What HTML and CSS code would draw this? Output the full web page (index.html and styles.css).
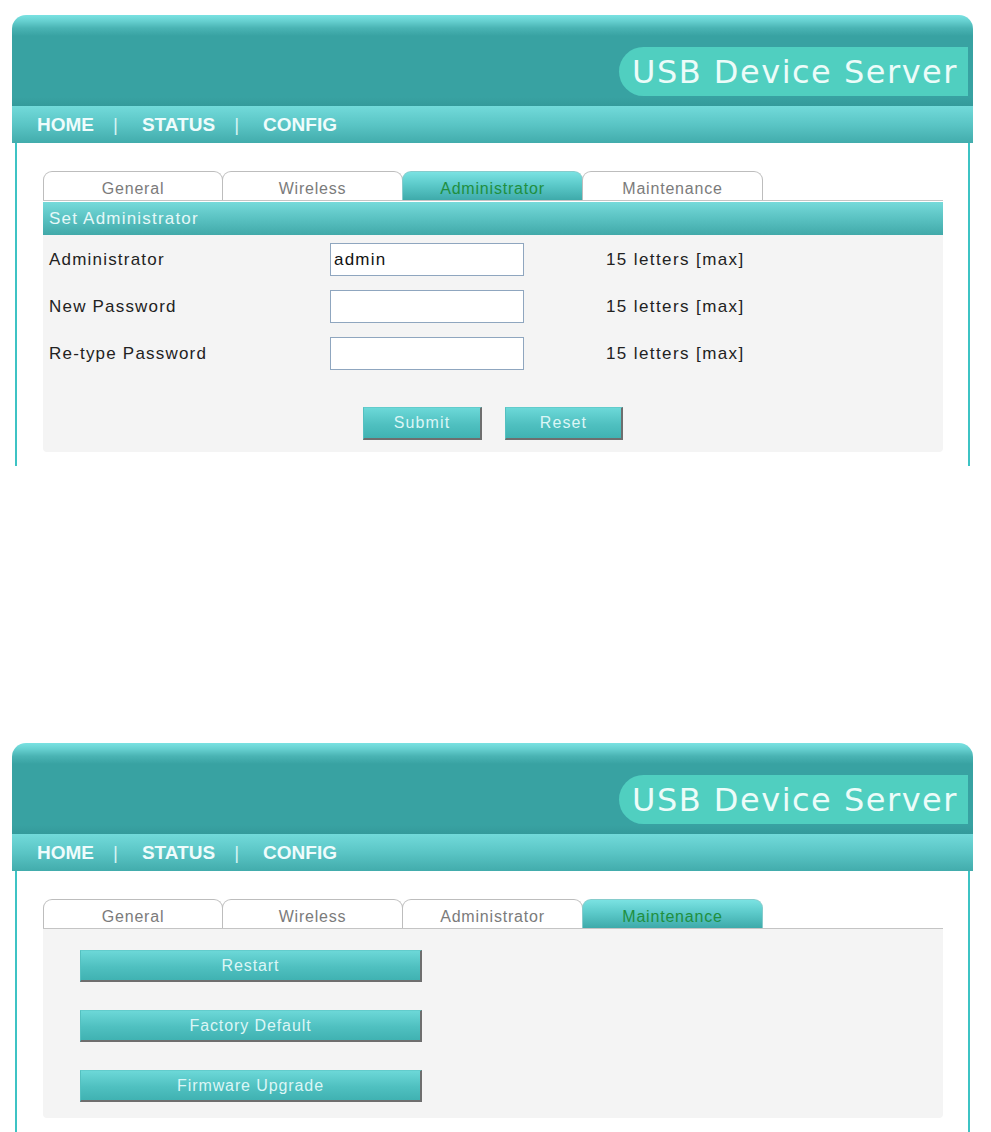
FILE: index.html
```html
<!DOCTYPE html>
<html lang="en">
<head>
<meta charset="utf-8">
<title>USB Device Server</title>
<link rel="stylesheet" href="styles.css">
</head>
<body>
<div class="page">
  <section class="panel">
    <div class="header"><div class="logo">USB Device Server</div></div>
    <nav class="nav"><span>HOME</span><span class="sep">|</span><span>STATUS</span><span class="sep">|</span><span>CONFIG</span></nav>
    <div class="body">
      <div class="tabs">
        <div class="tab">General</div>
        <div class="tab">Wireless</div>
        <div class="tab active">Administrator</div>
        <div class="tab">Maintenance</div>
      </div>
      <div class="section-title">Set Administrator</div>
      <form class="form">
        <div class="rows">
          <div class="row"><span class="label">Administrator</span><input class="input" type="text" value="admin"><span class="hint">15 letters [max]</span></div>
          <div class="row"><span class="label">New Password</span><input class="input" type="password" value=""><span class="hint">15 letters [max]</span></div>
          <div class="row"><span class="label">Re-type Password</span><input class="input" type="password" value=""><span class="hint">15 letters [max]</span></div>
        </div>
        <div class="actions">
          <button type="button" class="btn btn-submit">Submit</button>
          <button type="button" class="btn btn-reset">Reset</button>
        </div>
      </form>
    </div>
  </section>

  <section class="panel">
    <div class="header"><div class="logo">USB Device Server</div></div>
    <nav class="nav"><span>HOME</span><span class="sep">|</span><span>STATUS</span><span class="sep">|</span><span>CONFIG</span></nav>
    <div class="body">
      <div class="tabs">
        <div class="tab">General</div>
        <div class="tab">Wireless</div>
        <div class="tab">Administrator</div>
        <div class="tab active">Maintenance</div>
      </div>
      <div class="maint">
        <button type="button" class="btn btn-wide">Restart</button>
        <button type="button" class="btn btn-wide">Factory Default</button>
        <button type="button" class="btn btn-wide">Firmware Upgrade</button>
      </div>
    </div>
  </section>
</div>
</body>
</html>
```
FILE: styles.css
```css
* { box-sizing: border-box; }
html, body { margin: 0; background: #fff; }
body { font-family: "Liberation Sans", Arial, sans-serif; color: #222; }

.page {
  display: flex;
  flex-direction: column;
  gap: 277px;
  padding: 15px 0 0 12px;
}
.panel { width: 961px; }

.header {
  height: 91px;
  border-radius: 14px 14px 0 0;
  background: linear-gradient(to bottom, #7ae2e2 0px, #66d0d0 6px, #4ab4b4 13px, #38a2a2 21px, #38a2a2 82px, #349a9b 91px);
  display: flex;
  justify-content: flex-end;
  padding: 32px 5px 0 0;
}
.logo {
  width: 349px;
  height: 49px;
  background: #50cfc0;
  border-radius: 25px 0 0 25px;
  color: #ecfcf9;
  font-family: "DejaVu Sans", sans-serif;
  font-size: 32px;
  letter-spacing: 1.5px;
  display: flex;
  align-items: center;
  padding-left: 13px;
  white-space: nowrap;
}

.nav {
  height: 37px;
  background: linear-gradient(to bottom, #72dada, #5ac5c5 50%, #42acac);
  display: flex;
  align-items: center;
  padding-left: 25px;
  color: #effcfc;
  font-weight: bold;
  font-size: 19px;
}
.sep {
  font-weight: normal;
  margin: 0 24px 0 19px;
  color: #d5f3f3;
}

.body {
  margin: 0 3px;
  border-left: 2px solid #3dc3c4;
  border-right: 2px solid #3dc3c4;
  padding: 28px 25px 14px 26px;
  background: #fff;
}

.tabs {
  display: flex;
  height: 30px;
  border-bottom: 1px solid #c4c4c4;
}
.tab {
  width: 181px;
  height: 29px;
  border: 1px solid #bdbdbd;
  border-bottom: none;
  border-radius: 9px 9px 0 0;
  background: #fff;
  color: #7b7b7b;
  font-size: 16px;
  letter-spacing: 0.8px;
  text-align: center;
  padding-top: 8px;
}
.tab:first-child { width: 180px; }
.tab + .tab { margin-left: -1px; }
.tab.active {
  background: linear-gradient(to bottom, #7ae2e2, #5ccaca 45%, #3eaaaa);
  border-color: #86cccc;
  color: #1f8f3f;
}

.section-title {
  margin-top: 1px;
  height: 33px;
  background: linear-gradient(to bottom, #76dada, #5ac2c2 50%, #41a9a9);
  color: #e6f8f8;
  font-size: 17px;
  letter-spacing: 1.2px;
  padding-left: 6px;
  display: flex;
  align-items: center;
}

.form {
  margin: 0;
  background: #f4f4f4;
  padding: 8px 0 12px 0;
  border-radius: 0 0 4px 4px;
  font-size: 17px;
  letter-spacing: 1.2px;
}
.rows { display: flex; flex-direction: column; gap: 14px; }
.row { display: flex; align-items: center; height: 33px; }
.label { width: 287px; padding-left: 6px; }
.input {
  width: 194px;
  height: 33px;
  border: 1px solid #8fa6bf;
  background: #fff;
  font-family: "Liberation Sans", Arial, sans-serif;
  font-size: 17px;
  letter-spacing: 1.2px;
  color: #111;
  padding: 0 3px;
  margin: 0;
}
.hint { margin-left: 82px; letter-spacing: 1.4px; }

.actions {
  display: flex;
  justify-content: center;
  gap: 23px;
  margin-top: 37px;
}

.btn {
  height: 33px;
  border-top: 1px solid #62cccc;
  border-left: 1px solid #54c0c0;
  border-right: 2px solid #6e6e6e;
  border-bottom: 2px solid #6e6e6e;
  background: linear-gradient(to bottom, #6cd8d8, #4fc0c0 55%, #40b2b2);
  color: #dcf6f6;
  font-family: "Liberation Sans", Arial, sans-serif;
  font-size: 16px;
  letter-spacing: 1.1px;
  padding: 0;
  margin: 0;
}
.btn-submit { width: 119px; }
.btn-reset { width: 118px; }

.maint {
  background: #f4f4f4;
  padding: 21px 0 16px 37px;
  display: flex;
  flex-direction: column;
  align-items: flex-start;
  gap: 28px;
  border-radius: 0 0 4px 4px;
}
.btn-wide { width: 342px; height: 32px; letter-spacing: 0.9px; }
```
